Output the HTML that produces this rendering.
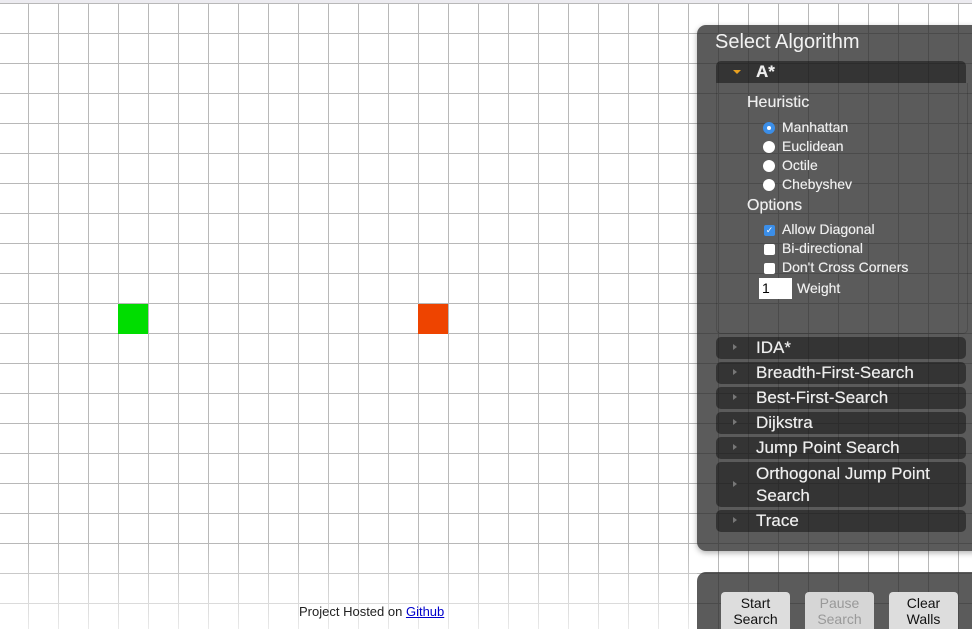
<!DOCTYPE html>
<html style="width:972px;height:629px;overflow:hidden"><head><style>
body{margin:0;width:972px;height:629px;overflow:hidden;position:relative;font-family:"Liberation Sans",sans-serif;background:#fff;}
#grid{position:absolute;left:0;top:0;width:972px;height:629px;
background-image:linear-gradient(to right,#b8b8b8 1px,transparent 1px),linear-gradient(to bottom,#b8b8b8 1px,transparent 1px);
background-size:30px 30px;background-position:28px 3px;}
.topline{position:absolute;left:0;top:0;width:972px;height:3px;background:#ecebf0;}
.cell{position:absolute;width:30px;height:30px;top:304px}
.panel{position:absolute;left:697px;top:25px;width:290px;height:526px;background:rgba(45,45,45,0.78);border-radius:9px;box-shadow:0 2px 6px rgba(0,0,0,.3);color:#eee}
.title{position:absolute;left:18px;top:6px;font-size:20px;color:#f2f2f2}
.hdr{position:absolute;left:19px;width:250px;background:rgba(20,20,20,0.55);border-radius:5px;font-size:17px;color:#eee;text-shadow:0 0 .5px #eee}
.hdr span{position:absolute;left:40px}
.tri{position:absolute;left:17px;width:0;height:0}
.content{position:absolute;left:19px;top:58px;width:250px;height:250px;border:1px solid rgba(0,0,0,.15);border-top:none;border-radius:0 0 5px 5px}
.lbl{position:absolute;font-size:16px;color:#eee;text-shadow:0 0 .5px #eee}
.opt{position:absolute;font-size:14px;color:#eee;text-shadow:0 0 .4px #eee}
.rad{position:absolute;width:12px;height:12px;border-radius:50%;background:#fff}
.chk{position:absolute;width:11px;height:11px;border-radius:2px;background:#fff}
.bot{position:absolute;left:697px;top:572px;width:290px;height:57px;background:rgba(45,45,45,0.78);border-radius:9px 0 0 0}
.btn{position:absolute;top:592px;width:69px;height:37px;background:#ddd;border-radius:4px 4px 0 0;font-size:14px;text-align:center;line-height:16px;color:#111;padding-top:3px;box-sizing:border-box}
.foot{position:absolute;left:0;top:545px;width:697px;height:84px;background:linear-gradient(rgba(255,255,255,0),rgba(255,255,255,.7))}
</style></head><body>
<div id="grid"></div><div class="topline"></div>
<div class="cell" style="left:118px;background:#00dd00"></div>
<div class="cell" style="left:418px;background:#ee4400"></div>
<div class="foot"></div>
<div style="position:absolute;left:299px;top:604px;font-size:13px;color:#222">Project Hosted on <span style="color:#00c;text-decoration:underline">Github</span></div>
<div class="panel">
<div class="title">Select Algorithm</div>
<div class="hdr" style="top:36px;height:22px;border-radius:5px 5px 0 0"><div class="tri" style="top:9px;border-left:4px solid transparent;border-right:4px solid transparent;border-top:4px solid #e8a020"></div><span style="top:1px;font-weight:bold">A*</span></div>
<div class="content"></div>
<div class="lbl" style="left:50px;top:69px">Heuristic</div>
<div class="rad" style="left:66px;top:97px;background:#3b8ee8"><div style="position:absolute;left:4px;top:4px;width:4px;height:4px;border-radius:50%;background:#fff"></div></div>
<div class="opt" style="left:85px;top:94px">Manhattan</div>
<div class="rad" style="left:66px;top:116px"></div><div class="opt" style="left:85px;top:113px">Euclidean</div>
<div class="rad" style="left:66px;top:135px"></div><div class="opt" style="left:85px;top:132px">Octile</div>
<div class="rad" style="left:66px;top:154px"></div><div class="opt" style="left:85px;top:151px">Chebyshev</div>
<div class="lbl" style="left:50px;top:172px">Options</div>
<div class="chk" style="left:67px;top:200px;background:#3b8ee8;color:#fff;font-size:9px;line-height:11px;text-align:center">✓</div><div class="opt" style="left:85px;top:196px">Allow Diagonal</div>
<div class="chk" style="left:67px;top:219px"></div><div class="opt" style="left:85px;top:215px">Bi-directional</div>
<div class="chk" style="left:67px;top:238px"></div><div class="opt" style="left:85px;top:234px">Don't Cross Corners</div>
<div style="position:absolute;left:62px;top:253px;width:33px;height:21px;background:#fff;color:#000;font-size:14px;line-height:21px;padding-left:3px;box-sizing:border-box">1</div>
<div class="opt" style="left:100px;top:255px">Weight</div>
<div class="hdr" style="top:312px;height:22px"><div class="tri" style="top:7px;border-top:3px solid transparent;border-bottom:3px solid transparent;border-left:4px solid #777"></div><span style="top:1px">IDA*</span></div>
<div class="hdr" style="top:337px;height:22px"><div class="tri" style="top:7px;border-top:3px solid transparent;border-bottom:3px solid transparent;border-left:4px solid #777"></div><span style="top:1px">Breadth-First-Search</span></div>
<div class="hdr" style="top:362px;height:22px"><div class="tri" style="top:7px;border-top:3px solid transparent;border-bottom:3px solid transparent;border-left:4px solid #777"></div><span style="top:1px">Best-First-Search</span></div>
<div class="hdr" style="top:387px;height:22px"><div class="tri" style="top:7px;border-top:3px solid transparent;border-bottom:3px solid transparent;border-left:4px solid #777"></div><span style="top:1px">Dijkstra</span></div>
<div class="hdr" style="top:412px;height:22px"><div class="tri" style="top:7px;border-top:3px solid transparent;border-bottom:3px solid transparent;border-left:4px solid #777"></div><span style="top:1px">Jump Point Search</span></div>
<div class="hdr" style="top:437px;height:45px"><div class="tri" style="top:19px;border-top:3px solid transparent;border-bottom:3px solid transparent;border-left:4px solid #777"></div><span style="top:1px;line-height:22px">Orthogonal Jump Point<br>Search</span></div>
<div class="hdr" style="top:485px;height:22px"><div class="tri" style="top:7px;border-top:3px solid transparent;border-bottom:3px solid transparent;border-left:4px solid #777"></div><span style="top:1px">Trace</span></div>
</div>
<div class="bot"></div>
<div class="btn" style="left:721px">Start<br>Search</div>
<div class="btn" style="left:805px;color:#999;background:#d6d6d6">Pause<br>Search</div>
<div class="btn" style="left:889px">Clear<br>Walls</div>
</body></html>
